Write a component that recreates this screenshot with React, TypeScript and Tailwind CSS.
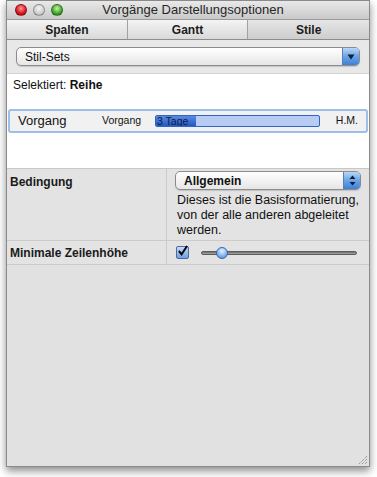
import React from "react";

const font = "font-['Liberation_Sans',Arial,sans-serif]";

function TrafficLight({ color }: { color: string }) {
  return (
    <span
      className="block w-[12px] h-[12px] rounded-full border border-black/30"
      style={{ background: color }}
    />
  );
}

export default function App() {
  return (
    <div className={`w-[377px] h-[477px] bg-white pl-[6px] pr-[7px] ${font}`}>
      <div className="h-[467px] flex flex-col border border-[#8a8a8a] shadow-[0_4px_8px_rgba(0,0,0,0.45)] bg-[#e1e1e1]">
        {/* Titelleiste */}
        <div className="h-[19px] flex items-center relative bg-gradient-to-b from-[#e9e9e9] to-[#c9c9c9] border-b border-[#9a9a9a]">
          <div className="flex gap-[6px] pl-[8px]">
            <TrafficLight color="radial-gradient(circle at 50% 35%, #ff9a9a, #d8141a 60%, #8e0b0b)" />
            <TrafficLight color="radial-gradient(circle at 50% 35%, #f4f4f4, #cfcfcf 60%, #a9a9a9)" />
            <TrafficLight color="radial-gradient(circle at 50% 35%, #c8f3a0, #3fa52a 60%, #1f6e12)" />
          </div>
          <div className="absolute inset-0 flex items-center justify-center text-[13px] text-[#262626] pl-[10px]">
            Vorgänge Darstellungsoptionen
          </div>
        </div>

        {/* Reiter */}
        <div className="h-[20px] grid grid-cols-3 border-b border-[#8d8d8d] text-[12px] font-bold text-[#1c1c1c]">
          <div className="flex items-center justify-center bg-gradient-to-b from-[#f4f4f4] to-[#d9d9d9] border-r border-[#a2a2a2]">Spalten</div>
          <div className="flex items-center justify-center bg-gradient-to-b from-[#f4f4f4] to-[#d9d9d9] border-r border-[#a2a2a2]">Gantt</div>
          <div className="flex items-center justify-center bg-gradient-to-b from-[#e6e6e6] to-[#cdcdcd]">Stile</div>
        </div>

        {/* Stil-Sets Popup */}
        <div className="bg-[#e8e8e8] px-[9px] pt-[7px] pb-[7px] border-b border-[#d4d4d4]">
          <div className="h-[19px] flex items-center rounded-[5px] border border-[#8c8c8c] bg-gradient-to-b from-[#ffffff] to-[#e6e6e6] shadow-[0_1px_1px_rgba(0,0,0,0.15)] overflow-hidden">
            <span className="flex-1 pl-[8px] text-[12px] text-[#111]">Stil-Sets</span>
            <span className="w-[17px] h-full flex items-center justify-center bg-gradient-to-b from-[#b9d6f7] via-[#6aa3e6] to-[#3d7fd8] border-l border-[#5a7fb3]">
              <svg width="8" height="6" viewBox="0 0 8 6">
                <path d="M0.5 0.5 L7.5 0.5 L4 5.5 Z" fill="#0d1f3a" />
              </svg>
            </span>
          </div>
        </div>

        {/* Vorschau */}
        <div className="bg-white h-[94px] pt-[2px]">
          <div className="pl-[6px] text-[12px] leading-[18px] text-[#111]">
            Selektiert: <span className="font-bold">Reihe</span>
          </div>
          <div className="mt-[15px] mx-[1px] h-[24px] rounded-[3px] border-2 border-[#9fbfe8] bg-[#f1f1f1] flex items-center px-[8px] text-[#111]">
            <span className="w-[84px] text-[13px]">Vorgang</span>
            <span className="w-[53px] text-[10.5px]">Vorgang</span>
            <div className="flex-1 h-[12px] rounded-[2px] border border-[#2d64c8] bg-[#b8cbf2] flex overflow-hidden">
              <div className="w-[40px] bg-gradient-to-b from-[#5a8ae0] to-[#2657c2] text-[10.5px] leading-[10px] text-[#0c1d44] pl-[1px]">
                3 Tage
              </div>
            </div>
            <span className="w-[38px] text-right text-[10.5px]">H.M.</span>
          </div>
        </div>

        {/* Eigenschaften */}
        <div className="border-t border-[#c8c8c8] bg-[#e3e3e3]">
          <div className="grid grid-cols-[160px_1fr] border-b border-[#cbcbcb]">
            <div className="pl-[3px] pt-[4px] text-[12px] font-bold text-[#1a1a1a] border-r border-[#cbcbcb]">
              Bedingung
            </div>
            <div className="pl-[8px] pr-[8px] pt-[2px] pb-[2px]">
              <div className="h-[19px] flex items-center rounded-[5px] border border-[#8c8c8c] bg-gradient-to-b from-[#ffffff] to-[#e6e6e6] shadow-[0_1px_1px_rgba(0,0,0,0.15)] overflow-hidden">
                <span className="flex-1 pl-[8px] text-[12px] font-bold text-[#111]">Allgemein</span>
                <span className="w-[17px] h-full flex items-center justify-center bg-gradient-to-b from-[#b9d6f7] via-[#6aa3e6] to-[#3d7fd8] border-l border-[#5a7fb3]">
                  <svg width="7" height="11" viewBox="0 0 7 11">
                    <path d="M3.5 0.5 L6.5 4 L0.5 4 Z" fill="#0d1f3a" />
                    <path d="M0.5 7 L6.5 7 L3.5 10.5 Z" fill="#0d1f3a" />
                  </svg>
                </span>
              </div>
              <p className="mt-[3px] pl-[2px] text-[12.5px] leading-[15px] text-[#111] whitespace-nowrap">
                Dieses ist die Basisformatierung,
                <br />
                von der alle anderen abgeleitet
                <br />
                werden.
              </p>
            </div>
          </div>

          <div className="grid grid-cols-[160px_1fr] h-[24px] border-b border-[#cbcbcb]">
            <div className="pl-[3px] flex items-center text-[12px] font-bold text-[#1a1a1a] border-r border-[#cbcbcb]">
              Minimale Zeilenhöhe
            </div>
            <div className="flex items-center pl-[9px] pr-[12px]">
              <span className="w-[13px] h-[13px] border border-[#4a6aa0] rounded-[2px] bg-gradient-to-b from-[#c7dcf7] to-[#6e9fe3] flex items-center justify-center">
                <svg width="12" height="12" viewBox="0 0 12 12" className="-mt-[3px]">
                  <path d="M2 6 L5 9.5 L11 0.5" stroke="#0b0b0b" strokeWidth="2.2" fill="none" />
                </svg>
              </span>
              <div className="flex-1 ml-[12px] relative h-[12px] flex items-center">
                <div className="w-full h-[4px] rounded-full bg-gradient-to-b from-[#6b6b6b] to-[#a9a9a9] border border-[#5c5c5c]" />
                <span className="absolute left-[15px] top-0 w-[12px] h-[12px] rounded-full border border-[#3d67a8] bg-[radial-gradient(circle_at_50%_30%,#e8f1ff,#7fb0ef_60%,#4a84d6)]" />
              </div>
            </div>
          </div>
        </div>

        <div className="flex-1 bg-[#e1e1e1] relative">
          <svg className="absolute right-[1px] bottom-[1px]" width="11" height="11" viewBox="0 0 11 11">
            <path d="M10 2 L2 10 M10 5 L5 10 M10 8 L8 10" stroke="#7a7a7a" strokeWidth="1" strokeDasharray="1 1" />
          </svg>
        </div>
      </div>
    </div>
  );
}
